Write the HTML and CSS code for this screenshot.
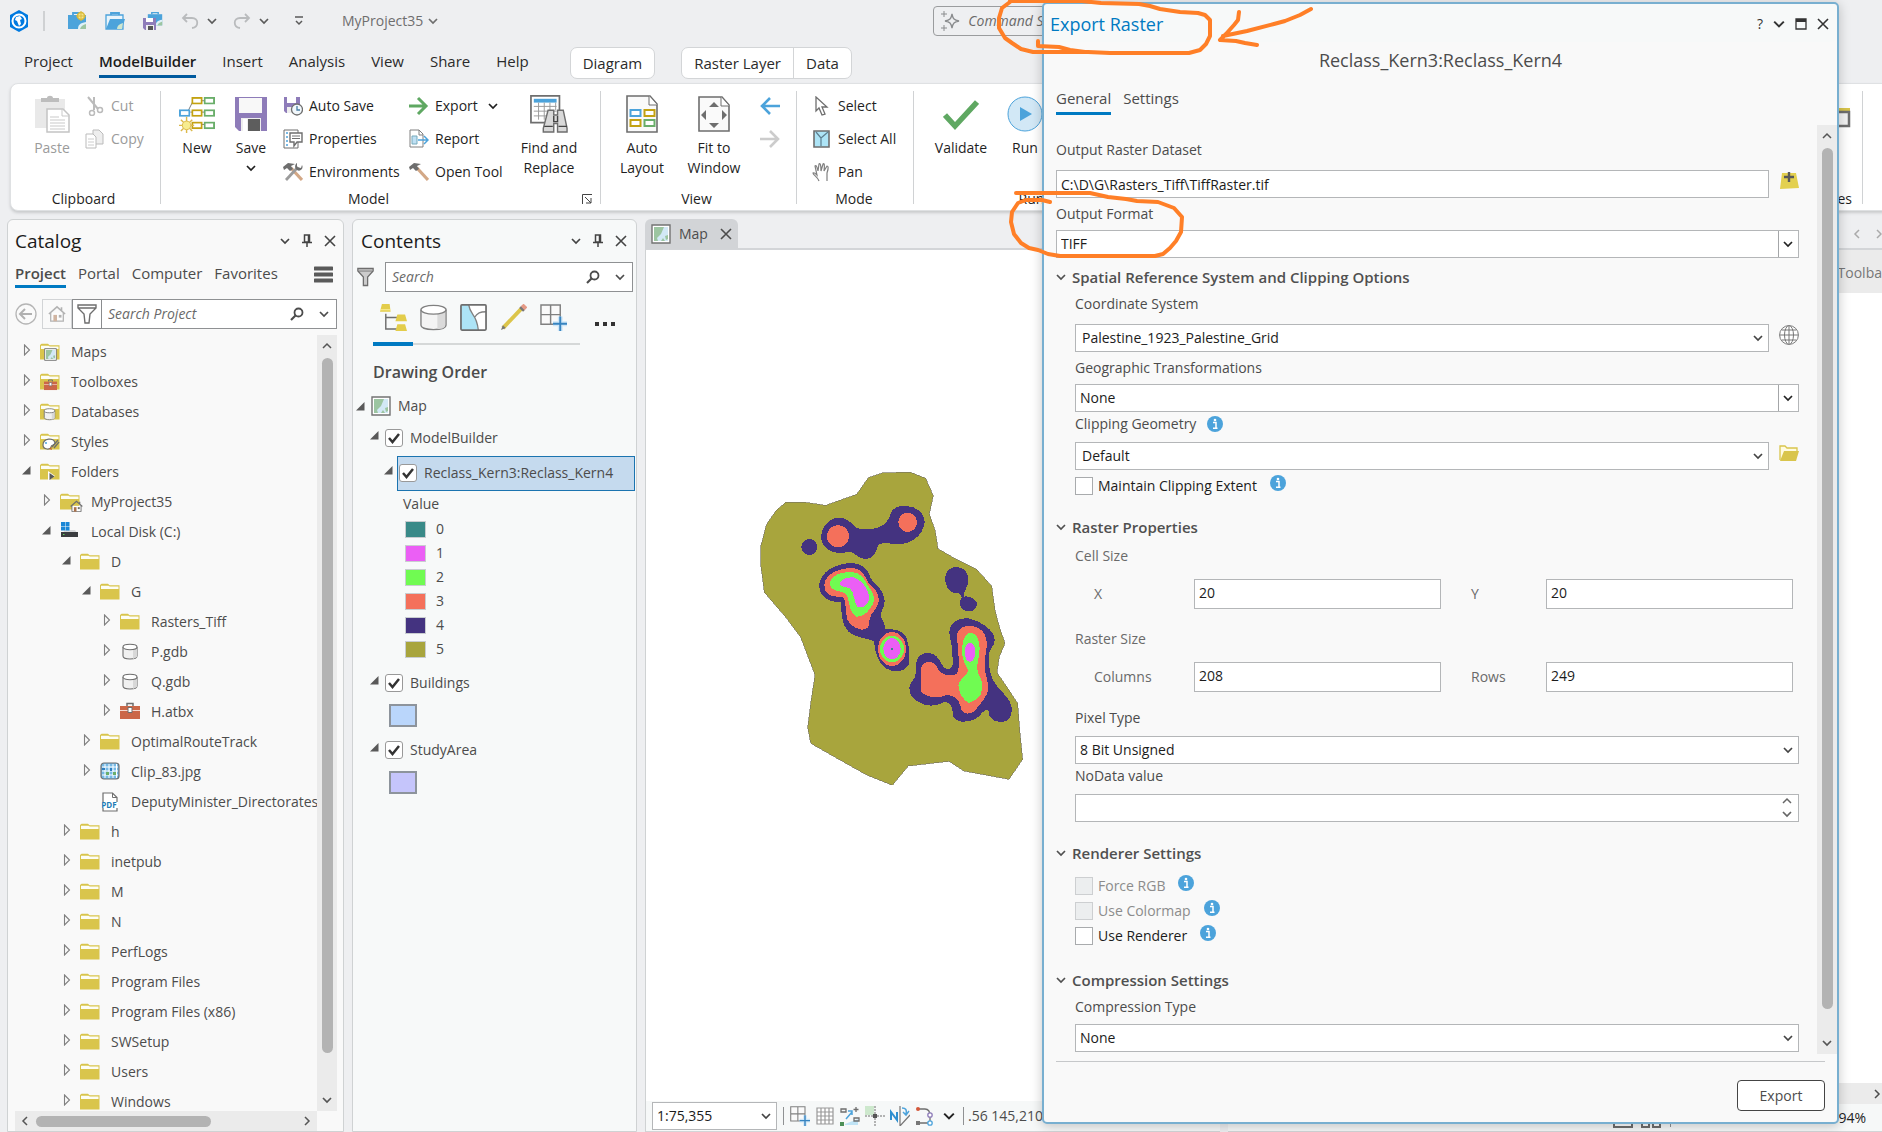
FILE: index.html
```html
<!DOCTYPE html>
<html lang="en">
<head>
  <meta charset="UTF-8">
  <meta name="viewport" content="width=device-width, initial-scale=1.0">
  <title>MyProject35</title>
  <link rel="stylesheet" href="styles.css">
</head>
<body>

<!-- shared icons -->
<svg class="defs" aria-hidden="true">
  <symbol id="chev" viewBox="0 0 10 10"><path d="M1 3l4 4 4-4" fill="none" stroke="currentColor" stroke-width="1.7"/></symbol>
  <symbol id="chev-up" viewBox="0 0 10 10"><path d="M1 7l4-4 4 4" fill="none" stroke="currentColor" stroke-width="1.5"/></symbol>
  <symbol id="chev-l" viewBox="0 0 10 10"><path d="M7 1L3 5l4 4" fill="none" stroke="currentColor" stroke-width="1.5"/></symbol>
  <symbol id="chev-r" viewBox="0 0 10 10"><path d="M3 1l4 4-4 4" fill="none" stroke="currentColor" stroke-width="1.5"/></symbol>
  <symbol id="x" viewBox="0 0 12 12"><path d="M1 1l10 10M11 1L1 11" fill="none" stroke="currentColor" stroke-width="1.6"/></symbol>
  <symbol id="pin" viewBox="0 0 12 14"><path d="M3.500 1h5v7h-5zM1 8.500h10M6 9v4M7.500 1v7" fill="none" stroke="currentColor" stroke-width="1.500"/></symbol>
  <symbol id="mag" viewBox="0 0 14 14"><circle cx="8.500" cy="5.500" r="4" fill="none" stroke="currentColor" stroke-width="1.800"/><path d="M5.500 8.500L1 13" stroke="currentColor" stroke-width="2.200"/></symbol>
  <symbol id="closed" viewBox="0 0 10 12"><path d="M2.500 1l5 5-5 5z" fill="none" stroke="#808080" stroke-width="1.100"/></symbol>
  <symbol id="open" viewBox="0 0 10 12"><path d="M8.500 2v8.500H0z" fill="#595959"/></symbol>
  <symbol id="folder" viewBox="0 0 20 20"><path d="M0 17.500V3l1.500-1.300h6.500l1.500 1.500h10v14.300z" fill="#d9c54c"/><path d="M1 7V3.800h7.500L9.800 4.500H18.500v2.500z" fill="#fdfdf4"/></symbol>
  <symbol id="folder-open" viewBox="0 0 20 20"><path d="M1 17V3h5l2 2h10v4" fill="#fffbe0" stroke="#d9c54c" stroke-width="1.300"/><path d="M1 18L5 8h15l-3 10z" fill="#d9c54c"/></symbol>
  <symbol id="cyl" viewBox="0 0 20 20"><path d="M3 5v9c0 4 14 4 14 0V5" fill="#f0f0f0" stroke="#6e6e6e" stroke-width="1.100"/><path d="M13 8v9l4-2V6z" fill="#d8d8d8"/><ellipse cx="10" cy="5" rx="7" ry="2.700" fill="#fff" stroke="#6e6e6e" stroke-width="1.100"/></symbol>
  <symbol id="toolbox" viewBox="0 0 20 20"><path d="M7 4V1.500h6V4" fill="none" stroke="#6e6e6e" stroke-width="1.500"/><path d="M0 4h20v13H0z" fill="#cb6748"/><path d="M0 8.500h20" stroke="#f6d9cf"/><path d="M8 5.500h4v5H8z" fill="#fff" stroke="#6e6e6e"/></symbol>
  <symbol id="map" viewBox="0 0 20 20"><path d="M1 1h18v18H1z" fill="#fff" stroke="#737373" stroke-width="1.400"/><path d="M3 3h14v14H3z" fill="#9cc5a1"/><path d="M13 3h4v14h-3l-2-3-2 3H7l-1-3 4-4z" fill="#d2e8f6"/><path d="M14 12l3-1v4l-2 1z" fill="#9cc5a1"/></symbol>
  <symbol id="home" viewBox="0 0 20 20"><path d="M3 9v9h14V9" fill="#fff" stroke="#6e6e6e" stroke-width="1.400"/><path d="M1 10l9-8 9 8M15 2.500v4" fill="none" stroke="#6e6e6e" stroke-width="1.800"/><path d="M6 11h4v7H6z" fill="#a9714b"/><path d="M12 11h3v3h-3z" fill="#6e6e6e"/></symbol>
  <symbol id="i-maps" viewBox="0 0 20 20"><use href="#folder"/><use href="#map" x="4" y="6" width="13" height="13"/></symbol>
  <symbol id="i-tools" viewBox="0 0 20 20"><use href="#folder"/><use href="#toolbox" x="4" y="7" width="13" height="13"/></symbol>
  <symbol id="i-db" viewBox="0 0 20 20"><use href="#folder"/><use href="#cyl" x="2" y="5" width="15" height="15"/></symbol>
  <symbol id="i-styles" viewBox="0 0 20 20"><use href="#folder"/><path d="M3 13c0-7 11-8 12-2 0 3-4 1-4 4s-8 3-8-2z" fill="#fff" stroke="#6e6e6e" stroke-width="1.200"/><path d="M12 15l6-7M14 16l5-6" stroke="#6e6e6e" stroke-width="1.300"/><circle cx="6" cy="11" r="1" fill="#4ca3db"/><path d="M9 17l2-2 1 3z" fill="#c0622f"/></symbol>
  <symbol id="i-folders" viewBox="0 0 20 20"><use href="#folder"/><path d="M8 9v10l7-5z" fill="#fff"/><path d="M9.500 11v7l5-3.500z" fill="#595959"/></symbol>
  <symbol id="i-proj" viewBox="0 0 23 20"><use href="#folder" width="20" height="20"/><use href="#home" x="10" y="8" width="13" height="13"/></symbol>
  <symbol id="disk" viewBox="0 0 20 20"><path d="M5 8h10l3 4H2z" fill="#d7d9db"/><path d="M1 10h17v5H1z" fill="#3b3d40"/><path d="M3 12h1.500v1H3z" fill="#5fd35f"/><path d="M1 0h4v4H1zM5.500 0h4v4h-4zM1 4.500h4v4H1zM5.500 4.500h4v4h-4z" fill="#1b87d6"/></symbol>
  <symbol id="raster" viewBox="0 0 20 20"><rect x="1" y="1" width="18" height="16" rx="3" fill="#74b9e6" stroke="#6e6e6e" stroke-width="1.200"/><path d="M5 2v14M9 2v14M13 2v14M16.500 2v14M2 5h16M2 9h16M2 13h16" stroke="#fff" stroke-width="1"/><path d="M6 10h3v3H6zM13 10h3v3h-3z" fill="#6aae6a"/><path d="M2 6h3v2H2zM10 6h2v3h-2z" fill="#2f7fc0"/></symbol>
  <symbol id="pdf" viewBox="0 0 20 20"><path d="M3 19V1h9.500L17 5.500V19z" fill="#fff" stroke="#6e6e6e" stroke-width="1.200"/><path d="M12.500 1v4.500H17" fill="none" stroke="#6e6e6e"/><path d="M1 10h17v6H1z" fill="#fff"/></symbol>
  <symbol id="info" viewBox="0 0 16 16"><circle cx="8" cy="8" r="8" fill="#4ca3db"/><circle cx="8" cy="4" r="1.300" fill="#fff"/><path d="M6 6.500h3v5.500M6 12.300h4.500" fill="none" stroke="#fff" stroke-width="1.500"/></symbol>
  <symbol id="node" viewBox="0 0 12 8"><rect x="1" y="1" width="10" height="6" fill="#fff" stroke="currentColor" stroke-width="2"/></symbol>
  <symbol id="gridplus" viewBox="0 0 28 28"><path d="M1 1h20v20H1zM11 1v20M1 11h20" fill="#fafafa" stroke="#808080" stroke-width="1.500"/><path d="M21 13v15M13.500 20.500h15" stroke="#cfe7f8" stroke-width="5"/><path d="M21 13v15M13.500 20.500h15" stroke="#3784c0" stroke-width="2"/></symbol>
  <symbol id="funnel" viewBox="0 0 20 22"><path d="M1 1h18v3l-6.500 7v10h-5V11L1 4z" fill="#ccc" stroke="#6e6e6e" stroke-width="1.500"/><path d="M2 4h16" stroke="#6e6e6e"/></symbol>
  <symbol id="hammer" viewBox="0 0 20 20"><path d="M8 6l11 12" stroke="#d3a886" stroke-width="3.200"/><path d="M0 5l5-4 7 1-4 2 2 3-3 2-3-3-3 2z" fill="#6e6e6e"/></symbol>
  <symbol id="projbox" viewBox="0 0 20 20"><path d="M6 4V2h8v2" fill="none" stroke="#4ca3db" stroke-width="1.800"/><path d="M1 4h18v14H1z" fill="#4ca3db"/><path d="M11 18c0-4 2-6 8-7v7z" fill="#dff0f7"/><path d="M13 18c1-3 3-4 6-5v5z" fill="#9cc5a1"/></symbol>
</svg>

<header class="titlebar">
  <svg class="logo" viewBox="0 0 20 22"><path d="M10 0l9 5v12l-9 5-9-5V5z" fill="#007ae0"/><circle cx="10" cy="11" r="6.500" fill="none" stroke="#fff" stroke-width="2"/><path d="M7 7l4-1 2 3-2 1 1 4-2 2-2-5-2-1z" fill="#fff"/></svg>
  <span class="tb-sep"></span>
  <button class="qat" aria-label="New project"><svg viewBox="0 0 20 20"><use href="#projbox"/><circle cx="14" cy="5" r="3.500" fill="#f7e68a" stroke="#d9b93a" stroke-width="1.500"/><path d="M14 0v10M9 5h10" stroke="#d9b93a"/></svg></button>
  <button class="qat" aria-label="Open project"><svg viewBox="0 0 20 20"><path d="M6 4V2h8v2" fill="none" stroke="#4ca3db" stroke-width="1.800"/><path d="M1 4h17v14H1z" fill="#e8f4fb" stroke="#4ca3db" stroke-width="1.300"/><path d="M1 18L5 8h15l-3 10z" fill="#4ca3db"/><path d="M12 18c0-3 2-5 6-6l-1 6z" fill="#cfe6cf"/></svg></button>
  <button class="qat" aria-label="Save project"><svg viewBox="0 0 20 20"><use href="#projbox" x="4" y="-1" width="16" height="18"/><path d="M0 7h13v12H2l-2-2z" fill="#8e7cb9"/><path d="M3 7h7v4H3z" fill="#fff"/><path d="M3 14h8v5H3z" fill="#eee"/><path d="M5 15h5v4H5z" fill="#555"/></svg></button>
  <button class="undo" aria-label="Undo"><svg viewBox="0 0 18 16"><path d="M6 1L2 5l4 4M2 5h9c7 0 7 9 0 10" fill="none" stroke="#b9bbbd" stroke-width="1.800"/></svg></button>
  <button class="tiny" aria-label="Undo list"><svg><use href="#chev"/></svg></button>
  <button class="undo" aria-label="Redo"><svg viewBox="0 0 18 16"><path d="M12 1l4 4-4 4M16 5H7c-7 0-7 9 0 10" fill="none" stroke="#b9bbbd" stroke-width="1.800"/></svg></button>
  <button class="tiny" aria-label="Redo list"><svg><use href="#chev"/></svg></button>
  <button class="tiny more" aria-label="Customize"><svg viewBox="0 0 10 10"><path d="M1 1h8M2 5l3 3 3-3" fill="none" stroke="currentColor" stroke-width="1.500"/></svg></button>
  <button class="project-name">MyProject35 <svg><use href="#chev"/></svg></button>
  <label class="command">
    <svg viewBox="0 0 20 20"><path d="M12 3c1 5 2 6 7 7-5 1-6 2-7 7-1-5-2-6-7-7 5-1 6-2 7-7z" fill="none" stroke="#8a8c8e" stroke-width="1.300"/><path d="M4 0v6M1 3h6M4 14v6M1 17h6" stroke="#8a8c8e"/></svg>
    <input type="text" placeholder="Command Search" aria-label="Command Search">
  </label>
</header>

<nav class="tabs">
  <button>Project</button>
  <button class="active">ModelBuilder</button>
  <button>Insert</button>
  <button>Analysis</button>
  <button>View</button>
  <button>Share</button>
  <button>Help</button>
  <span class="pill"><button>Diagram</button></span>
  <span class="pill second"><button>Raster Layer</button><button>Data</button></span>
</nav>

<section class="ribbon">
  <div class="group g-clip">
    <div class="tools">
      <button class="big off"><svg viewBox="0 0 36 38"><path d="M1 4h30v29H1z" fill="#e9e9e9"/><path d="M7 3h6c0-3 6-3 6 0h6v4H7z" fill="#bdbdbd"/><path d="M13 14h16l6 6v17H13z" fill="#fff" stroke="#c4c4c4" stroke-width="1.500"/><path d="M28 14v7h7M16 22h9M16 25h15M16 28h15M16 31h15M16 34h15" fill="none" stroke="#c9c9c9"/></svg>Paste</button>
      <div class="stack">
        <button class="off"><svg viewBox="0 0 20 20"><path d="M3 1l10 12M9 1v13" stroke="#bbb" stroke-width="2"/><circle cx="7" cy="17" r="2.500" fill="none" stroke="#bbb" stroke-width="1.500"/><circle cx="15" cy="14" r="2.500" fill="none" stroke="#bbb" stroke-width="1.500"/></svg>Cut</button>
        <button class="off"><svg viewBox="0 0 20 20"><path d="M8 1h6l4 4v10H8z" fill="#eee" stroke="#bbb"/><path d="M1 5h7l3 3v11H1z" fill="#fff" stroke="#bbb"/><path d="M3 10h6M3 13h6M3 16h6" stroke="#ccc"/></svg>Copy</button>
      </div>
    </div>
    <div class="group-name">Clipboard</div>
  </div>

  <div class="group g-model">
    <div class="tools">
      <button class="big"><svg viewBox="0 0 38 38"><path d="M9 17l6-12h12M12 17h16M18 30h10" fill="none" stroke="#777"/><g color="#4ca3db"><use href="#node" x="0" y="14" width="12" height="8"/></g><g color="#c3a211"><use href="#node" x="13" y="1" width="12" height="8"/><use href="#node" x="13" y="14" width="12" height="8"/><use href="#node" x="13" y="27" width="12" height="8"/></g><g color="#6aae6a"><use href="#node" x="26" y="1" width="12" height="8"/><use href="#node" x="26" y="14" width="12" height="8"/><use href="#node" x="26" y="27" width="12" height="8"/></g><path d="M8 22v17M0 31h16M2 25l12 12M14 25L2 37" stroke="#dcb94a" stroke-width="1.500"/><circle cx="8" cy="31" r="4.500" fill="#f7ec8f" stroke="#dcb94a"/></svg>New</button>
      <button class="big save"><svg viewBox="0 0 36 38"><path d="M2 2h32v34H6l-4-4z" fill="#8e7cb9"/><path d="M6 3h23v15H6z" fill="#f8f8f8"/><path d="M8 23h20v13H8z" fill="#eee"/><path d="M15 24h12v12H15z" fill="#5d5d5d"/><path d="M10 24h4v12h-4z" fill="#fff"/></svg>Save<svg class="mini"><use href="#chev"/></svg></button>
      <div class="stack">
        <button><svg viewBox="0 0 20 20"><path d="M1 1h16v16H3l-2-2z" fill="#8e7cb9"/><path d="M4 1h9v6H4z" fill="#fff"/><path d="M4 11h5v6H4z" fill="#eee"/><circle cx="14" cy="13.500" r="5.500" fill="#f2f8fc" stroke="#6e6e6e" stroke-width="1.300"/><path d="M14 10v4h3" fill="none" stroke="#4a7fa5" stroke-width="1.300"/></svg>Auto Save</button>
        <button><svg viewBox="0 0 20 20"><path d="M1 1h14v18H1z" fill="#fff" stroke="#6e6e6e"/><path d="M3 4h2M3 8h2M3 12h2M3 16h2" stroke="#4ca3db" stroke-width="1.500"/><path d="M7 4h12v9h-5l-3 4v-4H7z" fill="#fff" stroke="#6e6e6e" stroke-width="1.400"/><path d="M9 7h8M9 9.500h8" stroke="#6e6e6e"/></svg>Properties</button>
        <button><svg viewBox="0 0 20 20"><use href="#hammer"/><path d="M3 18L15 5" stroke="#9b9b9b" stroke-width="2.800"/><path d="M14 1v4l4 1 1-3c2 4-2 7-5 5-3-2-2-6 0-7z" fill="#6e6e6e"/></svg>Environments</button>
      </div>
      <div class="stack s2">
        <button><svg viewBox="0 0 20 20"><path d="M0 10h17M9 2l8 8-8 8" fill="none" stroke="#5fa862" stroke-width="3"/></svg>Export<svg class="mini"><use href="#chev"/></svg></button>
        <button><svg viewBox="0 0 20 20"><path d="M1 1h9l4 4v13H1z" fill="#fff" stroke="#808080"/><path d="M10 1v5h4" fill="none" stroke="#808080"/><path d="M3 7h5v8H3z" fill="#bfe0f4" stroke="#7ab"/><path d="M9 11h9M15 7l4 4-4 4" fill="none" stroke="#4ca3db" stroke-width="1.500"/></svg>Report</button>
        <button><svg viewBox="0 0 20 20"><use href="#hammer"/></svg>Open Tool</button>
      </div>
      <button class="big find"><svg viewBox="0 0 40 40"><path d="M1 1h30v28H1z" fill="#fff" stroke="#6e6e6e" stroke-width="1.800"/><path d="M4 4h24v4H4z" fill="#4ca3db"/><path d="M4 12h24M4 17h24M4 22h20M9 8v18M15 8v18M21 8v12M27 8v8" stroke="#999"/><path d="M19 16h6v5h4v-5h6l4 19v4H29v-9h-4v9H14v-4z" fill="#d9d9d9" stroke="#6e6e6e" stroke-width="1.500"/><path d="M15 33h9M30 33h9M25 22v6h4v-6" fill="none" stroke="#444" stroke-width="1.500"/></svg>Find and<br>Replace</button>
    </div>
    <div class="group-name">Model</div>
    <button class="launcher" aria-label="Model options"><svg viewBox="0 0 10 10"><path d="M.5 10V.5H10M3 3l6 6M9 4v5H4" fill="none" stroke="#444"/></svg></button>
  </div>

  <div class="group g-view">
    <div class="tools">
      <button class="big"><svg viewBox="0 0 36 38"><path d="M3 1h23l7 8v28H3z" fill="#fafafa" stroke="#6e6e6e" stroke-width="1.600"/><path d="M25 1v9h8" fill="#fff" stroke="#6e6e6e"/><g color="#4ca3db"><use href="#node" x="5" y="14" width="13" height="8"/></g><g color="#c3a211"><use href="#node" x="19" y="14" width="13" height="8"/><use href="#node" x="5" y="24" width="13" height="8"/></g><g color="#6aae6a"><use href="#node" x="19" y="24" width="13" height="8"/></g></svg>Auto<br>Layout</button>
      <button class="big"><svg viewBox="0 0 36 38"><path d="M3 2h23l7 8v26H3z" fill="#fafafa" stroke="#6e6e6e" stroke-width="1.600"/><path d="M25 2v9h8" fill="#fff" stroke="#6e6e6e"/><path d="M18 7l5 5H13zM18 33l5-5H13zM5 20l5-5v10zM31 20l-5-5v10z" fill="#6e6e6e"/></svg>Fit to<br>Window</button>
      <div class="stack arrows">
        <button aria-label="Back"><svg viewBox="0 0 20 20"><path d="M20 10H3M10 2l-8 8 8 8" fill="none" stroke="#4ca3db" stroke-width="2.600"/></svg></button>
        <button aria-label="Forward"><svg viewBox="0 0 20 20"><path d="M0 10h17M10 2l8 8-8 8" fill="none" stroke="#ccc" stroke-width="2.600"/></svg></button>
      </div>
    </div>
    <div class="group-name">View</div>
  </div>

  <div class="group g-mode">
    <div class="tools">
      <div class="stack">
        <button><svg viewBox="0 0 20 20"><path d="M4 1v14l3-3 3 7 3-1-3-7h5z" fill="#fff" stroke="#6e6e6e" stroke-width="1.300"/></svg>Select</button>
        <button><svg viewBox="0 0 20 20"><path d="M2 2h15v16H2z" fill="#ade4f6" stroke="#6e6e6e" stroke-width="1.600"/><path d="M4 3l5 6v8M9 9l7-6" fill="none" stroke="#5d7f8f" stroke-width="1.200"/></svg>Select All</button>
        <button><svg viewBox="0 0 20 20"><path d="M7 19c-1-4-6-6-6-8 1-1 3 1 4 2L3 4c1-1 2 0 3 5L7 2c1-1 2 0 2 7l2-7c1-1 2 0 1 7l3-5c1 0 2 1 0 7v8" fill="#fff" stroke="#808080" stroke-width="1.200"/></svg>Pan</button>
      </div>
    </div>
    <div class="group-name">Mode</div>
  </div>

  <div class="group g-run">
    <div class="tools">
      <button class="big"><svg viewBox="0 0 36 38"><path d="M2 20l10 11L34 7" fill="none" stroke="#5fa862" stroke-width="5.500"/></svg>Validate</button>
      <button class="big"><svg viewBox="0 0 36 38"><circle cx="18" cy="19" r="17" fill="#d2e8f6" stroke="#4ca3db"/><path d="M13 12v14l12-7z" fill="#4ca3db"/></svg>Run</button>
    </div>
    <div class="group-name">Run</div>
  </div>

  <div class="group g-last">
    <div class="tools">
      <button class="big"><svg viewBox="0 0 36 38"><path d="M4 13h30v4H4z" fill="#d9c54c"/><path d="M4 17h29v14H4z" fill="#f2f2f2" stroke="#6e6e6e" stroke-width="2.500"/></svg>n</button>
    </div>
    <div class="group-name">es</div>
  </div>
</section>

<main class="workspace">

  <!-- Catalog pane -->
  <aside class="pane catalog">
    <div class="pane-head">
      <h2>Catalog</h2>
      <button aria-label="Menu"><svg viewBox="0 0 10 10"><use href="#chev"/></svg></button>
      <button aria-label="Pin"><svg class="pin"><use href="#pin"/></svg></button>
      <button aria-label="Close"><svg class="close"><use href="#x"/></svg></button>
    </div>
    <div class="pane-tabs">
      <button class="active">Project</button>
      <button>Portal</button>
      <button>Computer</button>
      <button>Favorites</button>
      <button class="burger" aria-label="Options"><svg viewBox="0 0 19 17"><path d="M1 2.500h17M1 8.500h17M1 14.500h17" stroke="#5a5a5a" stroke-width="4" stroke-linecap="round"/></svg></button>
    </div>
    <div class="cat-search">
      <button class="back" aria-label="Back"><svg viewBox="0 0 22 22"><circle cx="11" cy="11" r="10" fill="#fafafa" stroke="#b5b5b5" stroke-width="1.300"/><path d="M17 11H6M10 6l-5 5 5 5" fill="none" stroke="#b0b0b0" stroke-width="2"/></svg></button>
      <button class="homebtn" aria-label="Home"><svg viewBox="0 0 20 20"><use href="#home"/></svg></button>
      <button class="filterbtn" aria-label="Filter"><svg viewBox="0 0 20 20"><path d="M1 1h18v3L13 10l-1 9H8L7 10 1 4zM1 4h18" fill="#fff" stroke="#6e6e6e" stroke-width="1.400"/></svg></button>
      <label class="search"><input type="text" placeholder="Search Project" aria-label="Search Project"><svg class="mag"><use href="#mag"/></svg><svg class="mini"><use href="#chev"/></svg></label>
    </div>
    <div class="tree-wrap">
      <ul class="tree">
        <li class="l0"><svg class="exp"><use href="#closed"/></svg><svg class="ic"><use href="#i-maps"/></svg>Maps</li>
        <li class="l0"><svg class="exp"><use href="#closed"/></svg><svg class="ic"><use href="#i-tools"/></svg>Toolboxes</li>
        <li class="l0"><svg class="exp"><use href="#closed"/></svg><svg class="ic"><use href="#i-db"/></svg>Databases</li>
        <li class="l0"><svg class="exp"><use href="#closed"/></svg><svg class="ic"><use href="#i-styles"/></svg>Styles</li>
        <li class="l0"><svg class="exp"><use href="#open"/></svg><svg class="ic"><use href="#i-folders"/></svg>Folders</li>
        <li class="l1"><svg class="exp"><use href="#closed"/></svg><svg class="ic wide"><use href="#i-proj"/></svg>MyProject35</li>
        <li class="l1"><svg class="exp"><use href="#open"/></svg><svg class="ic"><use href="#disk"/></svg>Local Disk (C:)</li>
        <li class="l2"><svg class="exp"><use href="#open"/></svg><svg class="ic"><use href="#folder"/></svg>D</li>
        <li class="l3"><svg class="exp"><use href="#open"/></svg><svg class="ic"><use href="#folder"/></svg>G</li>
        <li class="l4"><svg class="exp"><use href="#closed"/></svg><svg class="ic"><use href="#folder"/></svg>Rasters_Tiff</li>
        <li class="l4"><svg class="exp"><use href="#closed"/></svg><svg class="ic"><use href="#cyl"/></svg>P.gdb</li>
        <li class="l4"><svg class="exp"><use href="#closed"/></svg><svg class="ic"><use href="#cyl"/></svg>Q.gdb</li>
        <li class="l4"><svg class="exp"><use href="#closed"/></svg><svg class="ic"><use href="#toolbox"/></svg>H.atbx</li>
        <li class="l3"><svg class="exp"><use href="#closed"/></svg><svg class="ic"><use href="#folder"/></svg>OptimalRouteTrack</li>
        <li class="l3"><svg class="exp"><use href="#closed"/></svg><svg class="ic"><use href="#raster"/></svg>Clip_83.jpg</li>
        <li class="l3"><svg class="exp"></svg><svg class="ic" viewBox="0 0 20 20"><use href="#pdf"/><text class="pdf-text" x="9" y="16" text-anchor="middle">PDF</text></svg>DeputyMinister_Directorates</li>
        <li class="l2"><svg class="exp"><use href="#closed"/></svg><svg class="ic"><use href="#folder"/></svg>h</li>
        <li class="l2"><svg class="exp"><use href="#closed"/></svg><svg class="ic"><use href="#folder"/></svg>inetpub</li>
        <li class="l2"><svg class="exp"><use href="#closed"/></svg><svg class="ic"><use href="#folder"/></svg>M</li>
        <li class="l2"><svg class="exp"><use href="#closed"/></svg><svg class="ic"><use href="#folder"/></svg>N</li>
        <li class="l2"><svg class="exp"><use href="#closed"/></svg><svg class="ic"><use href="#folder"/></svg>PerfLogs</li>
        <li class="l2"><svg class="exp"><use href="#closed"/></svg><svg class="ic"><use href="#folder"/></svg>Program Files</li>
        <li class="l2"><svg class="exp"><use href="#closed"/></svg><svg class="ic"><use href="#folder"/></svg>Program Files (x86)</li>
        <li class="l2"><svg class="exp"><use href="#closed"/></svg><svg class="ic"><use href="#folder"/></svg>SWSetup</li>
        <li class="l2"><svg class="exp"><use href="#closed"/></svg><svg class="ic"><use href="#folder"/></svg>Users</li>
        <li class="l2"><svg class="exp"><use href="#closed"/></svg><svg class="ic"><use href="#folder"/></svg>Windows</li>
      </ul>
      <div class="vscroll"><svg><use href="#chev-up"/></svg><i class="thumb"></i><svg><use href="#chev"/></svg></div>
    </div>
    <div class="hscroll"><svg><use href="#chev-l"/></svg><i class="thumb"></i><svg class="end"><use href="#chev-r"/></svg></div>
  </aside>

  <!-- Contents pane -->
  <aside class="pane contents">
    <div class="pane-head">
      <h2>Contents</h2>
      <button aria-label="Menu"><svg viewBox="0 0 10 10"><use href="#chev"/></svg></button>
      <button aria-label="Pin"><svg class="pin"><use href="#pin"/></svg></button>
      <button aria-label="Close"><svg class="close"><use href="#x"/></svg></button>
    </div>
    <div class="con-search">
      <svg class="funnel"><use href="#funnel"/></svg>
      <label class="search"><input type="text" placeholder="Search" aria-label="Search"><svg class="mag"><use href="#mag"/></svg><svg class="mini"><use href="#chev"/></svg></label>
    </div>
    <div class="con-tools">
      <div class="con-icons">
        <button class="active" aria-label="List by drawing order"><svg viewBox="0 0 28 28"><path d="M6 10v16h12M6 14h12" fill="none" stroke="#6e6e6e" stroke-width="1.500"/><path d="M2 0h8l1 8H0zM18 11h8l2 7H16zM18 21h8l2 7H16z" fill="#e3cd4b"/><path d="M0 6h11" stroke="#fff3a0"/></svg></button>
        <button aria-label="List by data source"><svg viewBox="0 0 28 28"><path d="M1 6v16c0 6 26 6 26 0V6" fill="#f4f4f4" stroke="#808080" stroke-width="1.400"/><path d="M18 10v16c6 0 8-2 8-4V7z" fill="#dadada"/><ellipse cx="14" cy="6" rx="13" ry="4.500" fill="#fff" stroke="#808080" stroke-width="1.400"/></svg></button>
        <button aria-label="List by selection"><svg viewBox="0 0 28 28"><path d="M1 1h26v26H1z" fill="#fff"/><path d="M1 1h8c2 12 8 8 10 26H1z" fill="#ade4f6"/><path d="M9 1c2 12 8 8 10 26M15 14c3-5 6-6 12-6" fill="none" stroke="#808080" stroke-width="1.400"/><rect x="1" y="1" width="26" height="26" rx="1" fill="none" stroke="#6e6e6e" stroke-width="1.800"/></svg></button>
        <button aria-label="List by editing"><svg viewBox="0 0 28 28"><path d="M3 25L22 5" stroke="#dcc54a" stroke-width="4"/><path d="M1 27l2-5 3 3z" fill="#777"/><path d="M21 3l4 4" stroke="#777" stroke-width="3"/><path d="M23 1l4 4" stroke="#e59a86" stroke-width="4"/></svg></button>
        <button aria-label="List by snapping"><svg viewBox="0 0 28 28"><use href="#gridplus"/></svg></button>
      </div>
      <button class="dots" aria-label="More"><svg viewBox="0 0 20 4"><path d="M0 0h4v4H0zM8 0h4v4H8zM16 0h4v4h-4z" fill="#333"/></svg></button>
    </div>
    <h3>Drawing Order</h3>
    <div class="layer map-row"><svg class="exp"><use href="#open"/></svg><svg class="ic"><use href="#map"/></svg>Map</div>
    <div class="layer lv1"><svg class="exp up"><use href="#open"/></svg><label><input type="checkbox" checked>ModelBuilder</label></div>
    <div class="layer lv2"><svg class="exp up"><use href="#open"/></svg><label class="selected"><input type="checkbox" checked>Reclass_Kern3:Reclass_Kern4</label></div>
    <div class="value-head">Value</div>
    <ul class="legend">
      <li><i class="sw c0"></i>0</li>
      <li><i class="sw c1"></i>1</li>
      <li><i class="sw c2"></i>2</li>
      <li><i class="sw c3"></i>3</li>
      <li><i class="sw c4"></i>4</li>
      <li><i class="sw c5"></i>5</li>
    </ul>
    <div class="layer lv1"><svg class="exp up"><use href="#open"/></svg><label><input type="checkbox" checked>Buildings</label></div>
    <i class="patch blue"></i>
    <div class="layer lv1"><svg class="exp up"><use href="#open"/></svg><label><input type="checkbox" checked>StudyArea</label></div>
    <i class="patch violet"></i>
  </aside>

  <!-- Views -->
  <section class="views">
    <div class="view-tabs">
      <button class="view-tab"><svg class="ic"><use href="#map"/></svg>Map<svg class="close"><use href="#x"/></svg></button>
      <span class="nav"><svg><use href="#chev-l"/></svg><svg><use href="#chev-r"/></svg></span>
    </div>
    <div class="view-body">
      <div class="map-view">
        <div class="canvas">
          <svg class="study" viewBox="0 0 930 1050" shape-rendering="crispEdges">
            <path d="M137 157H195L257 166 350 133 385 83 430 68 512 67 557 85 580 137 568 192 585 240 594 296 640 323 710 358 755 408 765 480 778 530 795 580 778 620 771 668 800 710 833 760 840 850 848 928 807 988 672 963 627 934 505 948 457 1006 380 975 300 930 212 880 203 832 212 760 225 675 182 562 140 505 73 427 63 350 62 290 80 222 108 182z" fill="#a8a53d" stroke="#77745e" stroke-width="2"/>
            <g fill="#443380">
              <path d="M243 265C243 230 268 203 298 203C325 203 338 225 348 234C375 240 400 237 412 234C435 225 447 212 452 190C462 168 485 166 500 168C535 170 555 195 554 218C548 260 510 282 480 282C450 282 425 275 415 285C408 310 400 327 375 327C350 325 345 305 325 305C290 318 245 300 243 265z"/>
              <circle cx="208" cy="291" r="24"/>
              <path d="M237 410C237 365 290 338 340 339C370 342 385 360 392 385C405 405 434 420 434 452C434 475 420 485 422 500C430 510 434 525 436 536C460 538 490 540 498 560C510 590 510 620 506 645C490 668 460 668 438 655C415 640 404 605 402 573C380 565 345 562 325 545C305 525 304 490 303 456C270 458 240 445 237 410z"/>
              <path d="M615 385C615 362 632 350 650 351C675 352 686 370 685 390C684 415 670 422 672 440C690 436 710 448 712 462C708 485 690 486 675 482C660 478 655 455 665 442C660 425 655 432 645 430C625 425 615 405 615 385z"/>
              <path d="M628 545C630 515 655 503 685 505C725 515 763 540 764 570C763 590 745 600 746 620C746 650 750 680 765 700C780 725 815 745 816 780C812 815 795 817 775 815C755 812 745 800 745 780C730 775 722 800 705 808C680 818 640 822 638 790C640 765 625 752 610 757C590 770 560 770 540 758C515 745 508 735 508 712C510 695 527 690 527 670C525 640 530 608 565 609C605 612 600 655 622 657C640 660 641 640 636 610C638 580 628 570 628 545z"/>
            </g>
            <g fill="#f4705b">
              <circle cx="294" cy="259" r="33"/><ellipse cx="503" cy="217" rx="28" ry="29"/>
              <path d="M253 405C255 370 300 353 340 354C368 357 375 380 385 398C400 415 417 425 417 452C415 475 390 488 388 512C390 530 380 540 365 539C340 535 320 520 318 490C316 465 318 445 305 440C275 442 252 435 253 405z"/>
              <ellipse cx="456" cy="597" rx="42" ry="51"/>
              <path d="M652 550C660 525 690 525 710 532C735 540 740 565 741 585C735 620 732 640 735 665C745 690 745 715 742 730C730 755 715 765 705 783C690 795 665 795 662 770C655 745 640 735 620 735C600 745 560 745 543 725V655C550 630 580 630 590 650C600 675 625 680 650 672C665 650 650 600 652 550z"/>
            </g>
            <g fill="#70fb52">
              <path d="M269 400C272 375 305 365 335 366C365 368 375 390 385 408C400 425 405 445 400 460C390 485 365 502 350 500C325 490 330 450 318 432C300 420 270 425 269 400z"/>
              <ellipse cx="456" cy="597" rx="36" ry="40"/>
              <path d="M666 600C666 565 680 548 692 548C712 550 718 570 719 595C718 630 705 650 715 672C730 690 728 715 722 735C710 750 695 755 686 760C665 745 655 725 655 705C662 680 690 675 682 655C670 635 666 620 666 600z"/>
            </g>
            <g fill="#eb5ff5">
              <path d="M300 400C305 385 325 380 345 383C370 395 388 420 388 445C382 468 370 475 352 471C342 455 342 425 330 415C315 410 300 412 300 400z"/>
              <ellipse cx="456" cy="596" rx="26" ry="32"/><ellipse cx="690" cy="607" rx="16" ry="29"/>
            </g>
            <path d="M453 594h5v5h-5z" fill="#398a88"/>
          </svg>
        </div>
        <div class="status">
          <select aria-label="Map scale"><option>1:75,355</option></select>
          <span class="bar"></span>
          <svg viewBox="0 0 28 28"><use href="#gridplus"/></svg>
          <svg viewBox="0 0 20 20"><path d="M2 2h16v16H2zM6 2v16M10 2v16M14 2v16M2 6h16M2 10h16M2 14h16" fill="#fff" stroke="#999" stroke-width="1.200"/></svg>
          <svg viewBox="0 0 20 20"><path d="M5 18l13-5v6H5z" fill="#bfe3f5"/><path d="M1 3h5v3H1zM14 12h5v3h-5zM16 1v5M13.500 3.500h5" fill="none" stroke="#6e6e6e" stroke-width="1.300"/><path d="M6 13l6-7M8 5h4v4" fill="none" stroke="#4ca3db" stroke-width="1.500"/><path d="M0 16h4v4H0z" fill="#4d8f57"/></svg>
          <svg viewBox="0 0 20 20"><path d="M0 0h9v9H0z" fill="#cde8cd"/><path d="M0 10h20M10 0v20" stroke="#6e6e6e" stroke-dasharray="2 1"/><path d="M8 8h4v4H8z" fill="#555"/></svg>
          <svg viewBox="0 0 20 20"><path d="M1 14V6l6 8V6" fill="none" stroke="#2f8fd0" stroke-width="2"/><path d="M10 0v20L20 9" fill="none" stroke="#777" stroke-width="1.200"/><path d="M12 2c4 0 5 2 4 6M13 6l3 3 3-4" fill="none" stroke="#4ca3db" stroke-width="1.500"/></svg>
          <svg viewBox="0 0 20 20"><path d="M3 3h7c4 0 5 3 5 7v7H5" fill="none" stroke="#6e6e6e" stroke-width="1.300"/><circle cx="3" cy="3" r="2" fill="#d4583a"/><circle cx="15" cy="9" r="2.200" fill="#fff" stroke="#8e7cb9" stroke-width="1.300"/><circle cx="15" cy="17" r="2.200" fill="#fff" stroke="#4ca3db" stroke-width="1.300"/><path d="M1 15h4v4H1z" fill="#777"/></svg>
          <svg class="mini"><use href="#chev"/></svg>
          <span class="bar"></span>
          <span class="coords">.56 145,210</span>
        </div>
      </div>
      <div class="model-view">
        <div class="toolbox-head">Toolba</div>
        <div class="canvas"></div>
        <div class="model-scroll"><svg><use href="#chev-r"/></svg></div>
        <div class="status zoomed">
          <svg viewBox="0 0 20 20"><path d="M1 2h18v17H1z" fill="#fff" stroke="#6e6e6e" stroke-width="2"/></svg>
          <svg viewBox="0 0 20 20"><path d="M1 2h7v17H1zM12 2h7v17h-7z" fill="#fff" stroke="#6e6e6e" stroke-width="2"/></svg>
          <span class="bar"></span>
          <span class="percent">94%</span>
        </div>
      </div>
    </div>
  </section>
</main>

<!-- Export Raster window -->
<form class="dialog">
  <div class="dlg-head">
    <h1>Export Raster</h1>
    <button type="button" aria-label="Help">?</button>
    <button type="button" aria-label="Menu"><svg><use href="#chev"/></svg></button>
    <button type="button" aria-label="Maximize"><svg viewBox="0 0 12 12"><path d="M1 1h10v10H1z" fill="none" stroke="#333" stroke-width="1.300"/><path d="M1 1h10v3H1z" fill="#333"/></svg></button>
    <button type="button" aria-label="Close"><svg class="close"><use href="#x"/></svg></button>
  </div>
  <div class="dlg-title">Reclass_Kern3:Reclass_Kern4</div>
  <div class="dlg-tabs">
    <button type="button" class="active">General</button>
    <button type="button">Settings</button>
  </div>
  <div class="dlg-body">
    <div class="fields">
      <div class="field loose">
        <label for="out">Output Raster Dataset</label>
        <div class="with-icon">
          <input id="out" type="text" value="C:\D\G\Rasters_Tiff\TiffRaster.tif">
          <button type="button" aria-label="Browse output"><svg viewBox="0 0 20 20"><path d="M3 2h14l3 15-19 1z" fill="#e3d04f"/><path d="M10 1v10M5 6h10" stroke="#595959" stroke-width="2.400"/></svg></button>
        </div>
      </div>
      <div class="field tight">
        <label for="fmt">Output Format</label>
        <select id="fmt" class="boxed"><option>TIFF</option></select>
      </div>

      <h4><svg><use href="#chev"/></svg>Spatial Reference System and Clipping Options</h4>
      <div class="inner">
        <div class="field loose">
          <label for="cs">Coordinate System</label>
          <div class="with-icon">
            <select id="cs" class="pad"><option>Palestine_1923_Palestine_Grid</option></select>
            <button type="button" aria-label="Choose coordinate system"><svg viewBox="0 0 20 20"><g fill="#fff" stroke="#777"><circle cx="10" cy="10" r="9.400"/><ellipse cx="10" cy="10" rx="4.500" ry="9.400"/><path d="M1 10h18M10 1v18M3 5h14M3 15h14" fill="none"/></g></svg></button>
          </div>
        </div>
        <div class="field tight">
          <label for="gt">Geographic Transformations</label>
          <select id="gt" class="boxed"><option>None</option></select>
        </div>
        <div class="field">
          <label for="cg">Clipping Geometry <svg class="info"><use href="#info"/></svg></label>
          <div class="with-icon">
            <select id="cg" class="pad"><option>Default</option></select>
            <button type="button" aria-label="Browse geometry"><svg><use href="#folder-open"/></svg></button>
          </div>
        </div>
        <label class="check first"><input type="checkbox">Maintain Clipping Extent<svg class="info"><use href="#info"/></svg></label>
      </div>

      <h4 class="after-check"><svg><use href="#chev"/></svg>Raster Properties</h4>
      <div class="inner">
        <div class="sub">Cell Size</div>
        <div class="pair">
          <label for="cx">X</label><input id="cx" type="text" value="20">
          <label for="cy">Y</label><input id="cy" type="text" value="20">
        </div>
        <div class="sub">Raster Size</div>
        <div class="pair">
          <label for="cols">Columns</label><input id="cols" type="text" value="208">
          <label for="rows">Rows</label><input id="rows" type="text" value="249">
        </div>
        <div class="field after-pair">
          <label for="pt">Pixel Type</label>
          <select id="pt"><option>8 Bit Unsigned</option></select>
        </div>
        <div class="field">
          <label for="nd">NoData value</label>
          <div class="spin"><input id="nd" type="text"><span><svg><use href="#chev-up"/></svg><svg><use href="#chev"/></svg></span></div>
        </div>
      </div>

      <h4 class="spaced"><svg><use href="#chev"/></svg>Renderer Settings</h4>
      <div class="inner checks">
        <label class="check dim"><input type="checkbox" disabled>Force RGB<svg class="info"><use href="#info"/></svg></label>
        <label class="check dim"><input type="checkbox" disabled>Use Colormap<svg class="info"><use href="#info"/></svg></label>
        <label class="check"><input type="checkbox">Use Renderer<svg class="info"><use href="#info"/></svg></label>
      </div>

      <h4 class="spaced"><svg><use href="#chev"/></svg>Compression Settings</h4>
      <div class="inner">
        <div class="field tight first">
          <label for="ct">Compression Type</label>
          <select id="ct"><option>None</option></select>
        </div>
      </div>
    </div>
    <div class="vscroll"><svg><use href="#chev-up"/></svg><i class="thumb"></i><svg><use href="#chev"/></svg></div>
  </div>
  <div class="dlg-foot"><button type="button">Export</button></div>
</form>

<!-- freehand marks -->
<svg class="ink" width="320" height="260" viewBox="995 0 320 260" aria-hidden="true">
  <path d="M1010 2L1002 8 999 18 999 28 1005 38 1012 43 1021 49 1033 52H1088L1110 53 1189 53 1200 50 1206 44 1210 36V20L1205 15 1198 13 1180 12 1160 9 1150 6 1139 4 1101 3 1082 1H1010"/>
  <path d="M1038 41v5L1059 47 1070 50 1085 52"/>
  <path d="M1311 9L1300 15 1285 21 1274 24 1247 31 1223 36M1239 12L1238 20 1234 25 1226 34 1220 40 1236 41 1245 43 1257 45"/>
  <path d="M1016 193H1090L1108 197 1126 199 1137 201 1158 202 1174 208 1182 217 1181 232 1176 241 1170 248 1163 254 1155 256H1060L1048 254 1038 250 1029 248 1021 243 1014 234 1011 222 1012 212 1018 203 1026 200 1042 200 1050 202"/>
</svg>

</body>
</html>
```
FILE: styles.css
```css
* { box-sizing: border-box; }

body {
  margin: 0;
  height: 100vh;
  overflow: hidden;
  display: flex;
  flex-direction: column;
  position: relative;
  background: #eeeff1;
  color: #4c4c4c;
  font-family: "Open Sans", "Noto Sans", sans-serif;
  font-size: 14px;
  line-height: 20px;
}
button, input, select { font: inherit; color: inherit; }
button { background: none; border: 0; padding: 0; margin: 0; }
h1, h2, h3, h4, ul { margin: 0; padding: 0; font-weight: 400; }
ul { list-style: none; }
svg { display: block; flex: none; width: 10px; height: 10px; }
svg.defs { display: none; }
svg.mini { width: 10px; height: 10px; }
svg.close { width: 12px; height: 12px; }
svg.ic { width: 20px; height: 20px; }

/* title bar */
.titlebar {
  display: flex;
  align-items: center;
  height: 42px;
  padding-left: 9px;
  color: #5a5a5a;
}
.logo { width: 20px; height: 22px; }
.tb-sep { width: 2px; height: 20px; margin: 0 22px 0 14px; background: #cfd1d3; }
.qat { margin-right: 18px; }
.qat svg { width: 20px; height: 20px; }
.undo { margin-right: 8px; }
.undo svg { width: 18px; height: 16px; }
.tiny { margin-right: 16px; }
.tiny.more { margin: 0 38px 0 9px; }
.project-name { display: flex; align-items: center; gap: 5px; color: #6e6e6e; }
.command {
  display: flex;
  align-items: center;
  gap: 8px;
  height: 30px;
  width: 400px;
  margin-left: 495px;
  padding-left: 6px;
  border: 1px solid #9a9c9e;
  border-radius: 4px;
}
.command svg { width: 20px; height: 20px; }
.command input { border: 0; background: none; flex: 1; padding: 0; outline: 0; }
input::placeholder { font-style: italic; color: #6a6a6a; opacity: 1; }

/* ribbon tabs */
.tabs {
  display: flex;
  align-items: center;
  height: 41px;
  padding-left: 24px;
  gap: 26px;
  font-size: 15px;
  color: #2b2b2b;
}
.tabs > button { height: 30px; border-bottom: 3px solid transparent; }
.tabs > .active { font-weight: 600; border-color: #005a9e; color: #1c1c1c; }
.pill {
  display: flex;
  height: 32px;
  margin-left: 15px;
  background: #fff;
  border: 1px solid #d3d5d7;
  border-radius: 7px;
}
.pill.second { margin-left: 0; }
.pill button { padding: 0 12px; }
.pill button + button { border-left: 1px solid #d3d5d7; }

/* ribbon */
.ribbon {
  display: flex;
  flex: none;
  height: 128px;
  margin: 0 -8px 0 10px;
  padding: 7px 0 6px;
  background: #fff;
  border: 1px solid #dfe1e3;
  border-radius: 8px;
  box-shadow: 0 2px 3px #c9cbcd;
  color: #1f1f1f;
}
.group { display: flex; flex-direction: column; flex: none; position: relative; border-right: 1px solid #d0d2d4; }
.tools { display: flex; flex: 1; }
.group-name { text-align: center; line-height: 20px; margin-bottom: -5px; }
.g-clip { width: 150px; }
.g-clip .group-name { margin-right: 4px; }
.g-model { width: 440px; }
.g-model .group-name { margin-right: 24px; }
.g-view { width: 196px; }
.g-view .group-name { margin-right: 4px; }
.g-mode { width: 117px; }
.g-mode .group-name { margin-right: 2px; }
.g-run { width: 236px; }
.g-last { margin-left: auto; width: 90px; margin-right: 26px; }
.g-last .tools { justify-content: flex-end; }
.g-last .group-name { text-align: right; padding-right: 10px; }
.g-last .big svg { width: 36px; margin-right: -10px; }
.big { display: flex; flex-direction: column; align-items: center; width: 66px; padding-top: 4px; }
.big > svg:first-child { width: 36px; height: 38px; margin-bottom: 5px; }
.big .mini { margin-top: 5px; }
.off { color: #9b9b9b; }
.stack { display: flex; flex-direction: column; gap: 13px; padding-top: 5px; }
.stack button { display: flex; align-items: center; gap: 6px; height: 20px; white-space: nowrap; }
.stack button > svg:first-child { width: 20px; height: 20px; }
.stack button .mini { margin-left: 4px; }
.g-clip .big { margin-left: 8px; }
.g-model .big { margin-left: 3px; }
.g-model .save { width: 50px; margin: 0 7px 0 -4px; }
.g-model .stack { width: 126px; }
.g-model .s2 { width: 108px; }
.g-model .find { width: 70px; margin-left: -3px; }
.find > svg:first-child { width: 40px; }
.g-view .big { width: 72px; margin-left: 0; }
.g-view .big:first-child { margin-left: 5px; }
.g-view .stack { margin-left: 10px; }
.g-mode .stack { padding-left: 15px; }
.g-run .big { margin-left: 14px; }
.g-run .big + .big { margin-left: -2px; }
.launcher { position: absolute; right: 8px; bottom: 0; }

/* workspace */
.workspace { display: flex; flex: 1; min-height: 0; padding: 8px 0 0 7px; gap: 8px; }
.pane {
  display: flex;
  flex-direction: column;
  flex: none;
  min-height: 0;
  border: 1px solid #cfd2d3;
  border-radius: 6px 6px 0 0;
  background: #f9f9f9;
}
.catalog { width: 337px; padding: 0 6px 0 7px; }
.contents { width: 285px; background: #f7f9f9; }
.pane-head { display: flex; align-items: center; height: 39px; padding-top: 3px; gap: 11px; color: #444; }
.pane-head h2 { flex: 1; font-size: 19px; color: #1c1c1c; }
.pane-head .pin { width: 12px; height: 14px; }
.pane-head button:last-child { margin-right: 1px; }
.contents .pane-head { padding: 3px 8px 0 8px; }

.pane-tabs { display: flex; gap: 12px; height: 28px; margin-top: 1px; font-size: 15px; }
.pane-tabs button { border-bottom: 3px solid transparent; }
.pane-tabs .active { border-color: #007ac2; font-weight: 600; }
.pane-tabs .burger { margin: 0 4px 0 auto; border: 0; }
.burger svg { width: 19px; height: 17px; }

.cat-search { display: flex; height: 30px; margin-top: 11px; align-items: center; }
.back svg { width: 22px; height: 22px; }
.homebtn, .filterbtn { display: flex; align-items: center; justify-content: center; width: 30px; height: 30px; border: 1px solid #d2d4d6; }
.homebtn { margin-left: 5px; }
.homebtn svg { width: 18px; height: 18px; opacity: .5; }
.filterbtn { border-color: #8a8c8e; background: #fff; }
.filterbtn svg { width: 20px; height: 20px; }
.search { display: flex; align-items: center; flex: 1; height: 30px; min-width: 0; padding-right: 7px; border: 1px solid #8f9193; background: #fff; }
.filterbtn + .search { border-left: 0; }
.search input { flex: 1; min-width: 0; border: 0; padding: 0 6px; outline: 0; background: none; }
.search .mag { width: 14px; height: 14px; margin-right: 15px; }

.tree-wrap { display: flex; flex: 1; min-height: 0; margin-top: 6px; }
.tree { flex: 1; min-width: 0; overflow: hidden; padding-top: 2px; }
.tree li { display: flex; align-items: center; height: 30px; white-space: nowrap; }
.tree .exp { width: 10px; height: 12px; margin: 0 8px 4px 1px; }
.tree .ic { margin-right: 11px; }
.tree .wide { width: 23px; margin-right: 8px; }
.pdf-text { font-size: 8px; font-weight: 700; fill: #1f7cb5; }
.l0 { padding-left: 6px; }
.l1 { padding-left: 26px; }
.l2 { padding-left: 46px; }
.l3 { padding-left: 66px; }
.l4 { padding-left: 86px; }

.vscroll { display: flex; flex-direction: column; align-items: center; flex: none; width: 20px; padding: 6px 0; background: #ebebeb; color: #555; }
.vscroll .thumb { flex: 1; width: 11px; margin: 7px 0 42px; border-radius: 6px; background: #b3b3b3; }
.hscroll { display: flex; align-items: center; height: 20px; margin-right: 20px; padding: 0 5px; background: #ebebeb; color: #555; }
.hscroll .thumb { width: 175px; height: 11px; margin-left: 6px; border-radius: 6px; background: #b3b3b3; }
.hscroll .end { margin-left: auto; }

/* contents */
.con-search { display: flex; align-items: center; gap: 11px; margin: 3px 3px 0 4px; }
.funnel { width: 17px; height: 22px; }
.con-tools { display: flex; align-items: flex-start; margin: 12px 0 0 20px; height: 43px; }
.con-icons { display: flex; width: 207px; border-bottom: 2px solid #d5d8d8; height: 41px; }
.con-icons button { width: 40px; padding-bottom: 9px; height: 42px; border-bottom: 4px solid transparent; display: flex; justify-content: center; }
.con-icons .active { border-color: #007ac2; }
.con-icons svg { width: 27px; height: 27px; }
.dots { margin: 18px 0 0 15px; }
.dots svg { width: 20px; height: 4px; }
.contents h3 { padding: 10px 0 0 20px; height: 43px; line-height: 30px; font-size: 16px; font-weight: 600; }
.layer { display: flex; align-items: center; height: 32px; }
.layer .exp { width: 10px; height: 12px; }
.layer .exp.up { margin-bottom: 7px; }
.layer label { display: flex; align-items: center; gap: 7px; }
.map-row { padding-left: 3px; }
.map-row .ic { margin: 0 7px 0 5px; }
.lv1 { padding-left: 17px; gap: 5px; }
.lv2 { padding-left: 31px; gap: 3px; height: 38px; }
.layer .selected { flex: 1; height: 35px; padding-left: 1px; background: #c5daee; border: 1px solid #1b74b0; margin-right: 1px; }
.layer input {
  appearance: none;
  width: 18px;
  height: 18px;
  margin: 0;
  border: 1px solid #999;
  border-radius: 3px;
  background: #fff url("data:image/svg+xml,%3Csvg xmlns='http://www.w3.org/2000/svg' viewBox='0 0 16 16'%3E%3Cpath d='M3 8l3.500 4L13 4' fill='none' stroke='%23333' stroke-width='2.500'/%3E%3C/svg%3E");
}
.value-head { padding-left: 50px; line-height: 24px; font-weight: 500; }
.legend { margin: 1px 0 6px; }
.legend li { display: flex; align-items: center; gap: 10px; height: 24px; padding-left: 52px; }
.sw { width: 21px; height: 17px; border: 1px solid #c9cdd0; }
.c0 { background: #398a88; }
.c1 { background: #eb5ff5; }
.c2 { background: #70fb52; }
.c3 { background: #f4705b; }
.c4 { background: #443380; }
.c5 { background: #a8a53d; }
.patch { width: 28px; height: 23px; margin: 5px 0 7px 36px; border: 2px solid #8d949c; }
.blue { background: #bad6fb; }
.violet { background: #c5c5fb; }

/* views */
.views { display: flex; flex-direction: column; flex: 1; min-width: 0; }
.view-tabs { display: flex; align-items: center; height: 31px; border-bottom: 2px solid #d3d5d8; }
.view-tab { display: flex; align-items: center; gap: 8px; height: 30px; padding: 0 6px; background: #d2d4d7; border-radius: 6px 6px 0 0; }
.view-tab .close { margin-left: 4px; }
.nav { display: flex; gap: 12px; margin: 0 -2px 0 auto; color: #aaa; }
.view-body { display: flex; flex: 1; min-height: 0; gap: 8px; }
.map-view { display: flex; flex-direction: column; width: 575px; background: #fff; border-left: 1px solid #cfd2d3; }
.model-view { display: flex; flex-direction: column; flex: 1; min-width: 0; }
.canvas { flex: 1; min-height: 0; background: #fff; overflow: hidden; }
.study { width: 310px; height: 350px; margin: 200px 0 0 94px; }
.status { display: flex; align-items: center; gap: 5px; height: 31px; flex: none; padding-left: 6px; background: #f6f8f8; white-space: nowrap; border-bottom: 1px solid #d3d5d7; }
.status > svg { width: 20px; height: 20px; }
.status > svg.mini { width: 12px; height: 12px; margin: 0 2px 0 3px; color: #222; }
.status select { width: 125px; }
.bar { width: 1px; height: 18px; background: #8f9193; }
.status .bar { margin: 0 1px; }
.coords { margin-left: -2px; }
.toolbox-head { height: 43px; line-height: 46px; text-align: right; background: #ebebeb; color: #777; }
.model-scroll { display: flex; align-items: center; justify-content: flex-end; height: 21px; background: #ebebeb; }
.zoomed { justify-content: flex-end; gap: 8px; padding-right: 16px; height: 28px; color: #222; }
.percent { width: 186px; text-align: right; }

select {
  appearance: none;
  height: 28px;
  width: 100%;
  padding: 0 24px 0 4px;
  border: 1px solid #b4b6b8;
  border-radius: 0;
  color: #1c1c1c;
  background: #fff url("data:image/svg+xml,%3Csvg xmlns='http://www.w3.org/2000/svg' width='10' height='10'%3E%3Cpath d='M1 3l4 4 4-4' fill='none' stroke='%23444' stroke-width='1.700'/%3E%3C/svg%3E") no-repeat right 5px center;
}

/* dialog */
.dialog {
  position: absolute;
  top: 2px;
  right: 43px;
  bottom: 8px;
  width: min(797px, 90vw);
  display: flex;
  flex-direction: column;
  border: 2px solid #78afd0;
  border-radius: 5px;
  background: #f9f9f9;
  box-shadow: 0 2px 12px rgba(0,0,0,.22);
}
.dlg-head { display: flex; align-items: center; gap: 10px; height: 38px; padding: 1px 8px 0 6px; background: #f7f9f9; color: #333; border-radius: 5px; }
.dlg-head h1 { flex: 1; font-size: 18px; color: #007ac2; }
.dlg-head button svg { width: 12px; height: 12px; }
.dlg-title { text-align: center; font-size: 18px; line-height: 36px; }
.dlg-tabs { display: flex; gap: 12px; height: 36px; padding: 6px 0 0 12px; font-size: 15px; }
.dlg-tabs button { height: 31px; border-bottom: 3px solid transparent; }
.dlg-tabs .active { font-weight: 500; border-color: #007ac2; }
.dlg-body { display: flex; flex: 1; min-height: 0; margin-top: 11px; }
.fields { flex: 1; min-width: 0; padding: 13px 18px 0 12px; overflow: hidden; }
.inner { padding-left: 19px; }
.field { display: flex; flex-direction: column; gap: 6px; }
.field label { display: flex; align-items: center; gap: 11px; line-height: 24px; }
.field.loose { gap: 8px; }
.field.tight { gap: 4px; margin-top: 4px; }
.field input { height: 28px; width: 100%; }
.dialog input[type=text] { padding: 0 4px; border: 1px solid #b4b6b8; background: #fff; color: #1c1c1c; border-radius: 0; min-width: 0; }
.with-icon { display: grid; grid-template-columns: 1fr 30px; }
.with-icon button { justify-self: end; height: 22px; }
.with-icon svg { width: 20px; height: 20px; }
select.pad { padding-left: 6px; }
select.boxed {
  background-image: url("data:image/svg+xml,%3Csvg xmlns='http://www.w3.org/2000/svg' width='20' height='26'%3E%3Cpath d='M.5 0v26' stroke='%23a4a6a8'/%3E%3Cpath d='M6 11l4 4 4-4' fill='none' stroke='%23222' stroke-width='1.700'/%3E%3C/svg%3E");
  background-position: right 0 center;
}
.info { width: 16px; height: 16px; }
.fields h4 { display: flex; align-items: center; gap: 6px; margin-top: 7px; padding-bottom: 3px; font-size: 15px; font-weight: 600; line-height: 24px; color: #505050; }
.fields h4.after-check { margin-top: 17px; }
.fields h4.spaced { margin-top: 19px; }
.check { display: flex; align-items: center; gap: 5px; height: 25px; color: #1c1c1c; }
.check.first { margin-top: 3px; }
.check input { appearance: none; width: 18px; height: 18px; margin: 0; border: 1px solid #a9abad; background: #fff; }
.check .info { margin: 0 0 6px 8px; }
.dim { color: #8c8c8c; }
.dim input { background: #eceeef; border-color: #cdcfd1; }
.checks { padding: 5px 0 1px 19px; }
.sub { padding-top: 2px; line-height: 24px; }
.pair + .sub { padding-top: 18px; }
.sub, .pair { color: #6a6a6a; }
.pair { display: grid; grid-template-columns: 119px 1fr 105px 1fr; align-items: center; margin-top: 11px; padding-right: 6px; }
.pair label { padding-left: 19px; }
.pair label + input + label { padding-left: 30px; }
.pair input { height: 30px; }
.dialog .pair input { padding-bottom: 4px; }
.after-pair { margin-top: 14px; }
.field.first { margin-top: 0; gap: 5px; }
.spin { position: relative; }
.spin span { position: absolute; right: 7px; top: 2px; }
.spin svg { margin-bottom: 3px; color: #666; }
.dialog .thumb { margin-bottom: 29px; }
.dlg-foot { display: flex; justify-content: flex-end; height: 61px; margin: 7px 12px 0 12px; padding-top: 18px; border-top: 1px solid #c6c8ca; }
.dlg-foot button { height: 31px; width: 88px; border: 1px solid #444; border-radius: 4px; background: #fff; }

/* marks drawn over the window */
.ink { position: absolute; left: calc(100% - 887px); top: 0; width: 320px; height: 260px; pointer-events: none; }
.ink path { fill: none; stroke: #ff7f27; stroke-width: 4; stroke-linejoin: round; stroke-linecap: round; }
```
